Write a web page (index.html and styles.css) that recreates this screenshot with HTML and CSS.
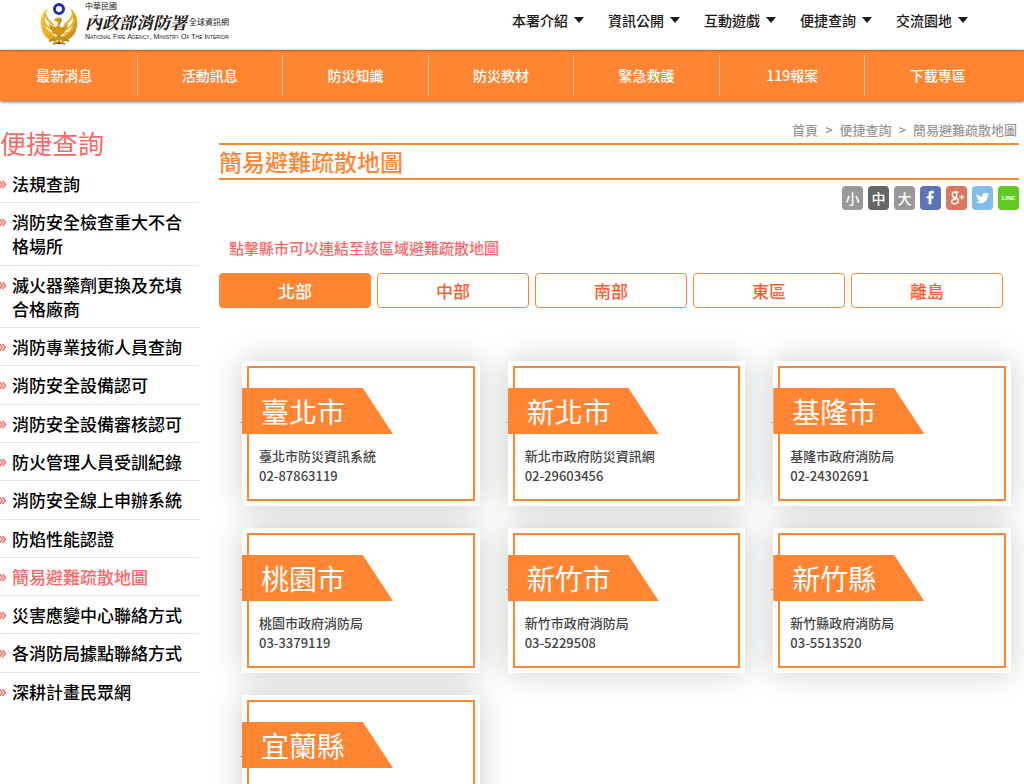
FILE: index.html
```html
<!DOCTYPE html>
<html lang="zh-Hant">
<head>
<meta charset="utf-8">
<meta name="viewport" content="width=device-width, initial-scale=1">
<title>簡易避難疏散地圖</title>
<link rel="stylesheet" href="styles.css">
</head>
<body>
<header class="top">
  <a class="logo" href="#">
    <svg class="emblem" viewBox="0 0 38 44" aria-hidden="true">
      <defs><linearGradient id="gold" x1="0" y1="0" x2="1" y2="1"><stop offset="0" stop-color="#f7d35a"/><stop offset=".5" stop-color="#e6ac1c"/><stop offset="1" stop-color="#b9861a"/></linearGradient></defs>
      <path d="M8 6C1 11-1 20 2 28c2 7 8 11 14 12l1-5C10 33 5 27 5 19c0-5 1-9 3-13zM30 6c7 5 9 14 6 22-2 7-8 11-14 12l-1-5c7-2 12-8 12-16 0-5-1-9-3-13z" fill="url(#gold)"/>
      <path d="M5 11c1 6 4 9 9 12M3 17c2 6 5 9 10 11M4 24c2 5 6 7 10 8M33 11c-1 6-4 9-9 12M35 17c-2 6-5 9-10 11M34 24c-2 5-6 7-10 8" fill="none" stroke="#e6b230" stroke-width="2"/>
      <path d="M14 19c1-4 8-5 8-1 0 3-3 4-2 7 2 1 5-1 8-4-1 7-4 11-7 12l3 7-4-2-1 4-1-4-4 2 3-7c-4-1-7-5-8-12 3 3 6 5 8 3 2-3 1-5-3-5z" fill="#cf9618"/>
      <path d="M9 39l6-2M29 39l-6-2M13 42l6-2 6 2" stroke="#b9861a" stroke-width="2"/>
      <circle cx="19" cy="7" r="4.500" fill="#fff" stroke="#1d2fb8" stroke-width="3"/>
    </svg>
    <span class="logo-text">
      <span class="logo-small">中華民國</span>
      <span class="logo-row"><strong class="logo-name">內政部消防署</strong><span class="logo-small">全球資訊網</span></span>
      <span class="logo-en">National Fire Agency, Ministry Of The Interior</span>
    </span>
  </a>
  <nav class="top-nav">
    <a href="#">本署介紹</a>
    <a href="#">資訊公開</a>
    <a href="#">互動遊戲</a>
    <a href="#">便捷查詢</a>
    <a href="#">交流園地</a>
  </nav>
</header>
<nav class="main-nav">
  <div class="main-nav-list">
    <a href="#">最新消息</a>
    <a href="#">活動訊息</a>
    <a href="#">防災知識</a>
    <a href="#">防災教材</a>
    <a href="#">緊急救護</a>
    <a href="#">119報案</a>
    <a href="#">下載專區</a>
  </div>
</nav>
<div class="page">
  <aside class="side">
    <h2 class="side-title">便捷查詢</h2>
    <ul class="side-list">
      <li><a href="#">法規查詢</a></li>
      <li><a href="#">消防安全檢查重大不合格場所</a></li>
      <li><a href="#">滅火器藥劑更換及充填合格廠商</a></li>
      <li><a href="#">消防專業技術人員查詢</a></li>
      <li><a href="#">消防安全設備認可</a></li>
      <li><a href="#">消防安全設備審核認可</a></li>
      <li><a href="#">防火管理人員受訓紀錄</a></li>
      <li><a href="#">消防安全線上申辦系統</a></li>
      <li><a href="#">防焰性能認證</a></li>
      <li><a class="current" href="#">簡易避難疏散地圖</a></li>
      <li><a href="#">災害應變中心聯絡方式</a></li>
      <li><a href="#">各消防局據點聯絡方式</a></li>
      <li><a href="#">深耕計畫民眾網</a></li>
    </ul>
  </aside>
  <main class="content">
    <nav class="crumbs"><a href="#">首頁</a><span>&gt;</span><a href="#">便捷查詢</a><span>&gt;</span><a href="#">簡易避難疏散地圖</a></nav>
    <h1 class="title">簡易避難疏散地圖</h1>
    <div class="tools">
      <button class="tool" type="button">小</button>
      <button class="tool tool-on" type="button">中</button>
      <button class="tool" type="button">大</button>
      <a class="tool facebook" href="#" aria-label="Facebook"><svg viewBox="0 0 22 24"><path d="M9 18.500v-6H7V9.800h2V8c0-2.500 1.300-3.500 3.400-3.500h2v2.700h-1.300c-.9 0-1.200.4-1.200 1.200v1.400h2.500l-.4 2.700h-2.100v6z" fill="#fff"/></svg></a>
      <a class="tool google" href="#" aria-label="Google Plus"><svg viewBox="0 0 22 24" fill="none" stroke="#fff"><ellipse cx="9" cy="8.500" rx="2.300" ry="2.700" stroke-width="1.500"/><path d="M9 5.700h4M10 11c3 2 3.300 3 2.700 5-.8 2.600-6.500 2.700-6.800 0-.2-2 2-2.700 4.500-2.600M9 11.300c-1 .8-.6 1.600.7 2.200" stroke-width="1.500"/><path d="M14 11h5M16.500 8.500v5" stroke-width="1.300"/></svg></a>
      <a class="tool twitter" href="#" aria-label="Twitter"><svg viewBox="0 0 22 24"><path d="M5 7.500c1.600 1.900 3.600 2.900 6 3-.5-2.500 1-4 2.800-4 .9 0 1.600.4 2.100.9l1.700-.6-1.100 1.600 1.500-.4-1.500 1.500c.1 4.700-3.200 8-7.400 8-1.800 0-3.400-.5-4.600-1.300 1.600.1 3-.3 4-1.200-1.300-.1-2.200-.8-2.500-1.900h1.100c-1.400-.4-2.200-1.500-2.200-2.800l1.200.3C4.800 9.800 4.500 8.600 5 7.500z" fill="#fff"/></svg></a>
      <a class="tool line" href="#">LINE</a>
    </div>
    <p class="note">點擊縣市可以連結至該區域避難疏散地圖</p>
    <div class="tabs">
      <button class="tab tab-on" type="button">北部</button>
      <button class="tab" type="button">中部</button>
      <button class="tab" type="button">南部</button>
      <button class="tab" type="button">東區</button>
      <button class="tab" type="button">離島</button>
    </div>
    <div class="cards">
      <a class="card" href="#"><div class="frame"><h3 class="city">臺北市</h3><p>臺北市防災資訊系統</p><p>02-87863119</p></div></a>
      <a class="card" href="#"><div class="frame"><h3 class="city">新北市</h3><p>新北市政府防災資訊網</p><p>02-29603456</p></div></a>
      <a class="card" href="#"><div class="frame"><h3 class="city">基隆市</h3><p>基隆市政府消防局</p><p>02-24302691</p></div></a>
      <a class="card" href="#"><div class="frame"><h3 class="city">桃園市</h3><p>桃園市政府消防局</p><p>03-3379119</p></div></a>
      <a class="card" href="#"><div class="frame"><h3 class="city">新竹市</h3><p>新竹市政府消防局</p><p>03-5229508</p></div></a>
      <a class="card" href="#"><div class="frame"><h3 class="city">新竹縣</h3><p>新竹縣政府消防局</p><p>03-5513520</p></div></a>
      <a class="card" href="#"><div class="frame"><h3 class="city">宜蘭縣</h3></div></a>
    </div>
  </main>
</div>
</body>
</html>
```
FILE: styles.css
```css
* { box-sizing: border-box; }
body {
  margin: 0;
  background: #fff;
  color: #000;
  font-family: "Noto Sans CJK TC", sans-serif;
  font-size: 14px;
  font-weight: 500;
  overflow-x: hidden;
}
a { color: inherit; text-decoration: none; }
h1, h2, h3, p, ul { margin: 0; padding: 0; }
button { font: inherit; cursor: pointer; padding: 0; }

.top {
  display: flex;
  justify-content: space-between;
  align-items: flex-start;
  height: 50px;
  padding: 0 56px 0 40px;
}
.logo { display: flex; gap: 7px; padding-top: 2px; color: #221815; }
.emblem { width: 38px; height: 44px; }
.logo-text { display: flex; flex-direction: column; }
.logo-small { font-size: 8px; line-height: 8px; font-weight: 400; }
.logo-row { display: flex; align-items: center; gap: 2px; }
.logo-name {
  font-family: "Noto Serif CJK TC", "Noto Sans CJK TC", serif;
  font-size: 17px;
  line-height: 23px;
  font-weight: 700;
  font-style: italic;
}
.logo-en {
  font-family: "Liberation Sans", sans-serif;
  font-size: 7px;
  line-height: 8px;
  font-weight: 400;
  font-variant: small-caps;
  white-space: nowrap;
}
.top-nav { display: flex; gap: 24px; padding-top: 8px; }
.top-nav a {
  display: flex;
  align-items: center;
  gap: 6px;
  line-height: 24px;
  color: #221815;
}
.top-nav a::after {
  content: "";
  border: 5px solid transparent;
  border-top: 6px solid #221815;
  border-bottom: 0;
}

.main-nav {
  position: relative;
  padding: 5px 14px 5px 0;
  background: #ff8533;
  box-shadow: 0 1px 3px rgba(0, 0, 0, .6), inset 0 2px 2px -1px rgba(0, 0, 0, .3);
}
.main-nav-list { display: flex; margin-left: -8px; }
.main-nav a {
  flex: 1;
  text-align: center;
  line-height: 41px;
  color: #fff;
}
.main-nav a + a { border-left: 1px solid #ffc299; }

.page { display: flex; gap: 20px; padding-right: 5px; }
.side { flex: 0 0 199px; padding-top: 22px; }
.side-title { font-size: 26px; line-height: 40px; font-weight: 400; color: #ff6666; }
.side-list {
  display: flex;
  flex-direction: column;
  min-height: 548px;
  padding-top: 2px;
  list-style: none;
}
.side-list li {
  flex: 1 0 auto;
  padding: 7px 0 6px;
  border-bottom: 1px solid #e6e6e6;
}
.side-list li:last-child { border-bottom-color: transparent; }
.side-list a {
  display: block;
  padding: 0 15px 0 12px;
  font-size: 17px;
  line-height: 24px;
  background: url("data:image/svg+xml,%3Csvg xmlns='http://www.w3.org/2000/svg' width='7' height='9' fill='none' stroke='%23ff6666' stroke-width='1.4'%3E%3Cpath d='M-.5 1L2.500 4.500L-.5 8M2.500 1L5.500 4.500L2.500 8'/%3E%3C/svg%3E") 0 8px no-repeat;
}
.side-list .current { color: #ff6666; }

.content { flex: 1; min-width: 0; padding-top: 17px; }
.crumbs {
  display: flex;
  justify-content: flex-end;
  gap: 7px;
  padding-right: 2px;
  font-size: 13px;
  line-height: 24px;
  color: #999;
}
.title {
  margin-top: 1px;
  border: solid #ff8533;
  border-width: 2px 0;
  font-size: 23px;
  line-height: 33px;
  font-weight: 500;
  color: #ff8533;
}
.tools { display: flex; justify-content: flex-end; gap: 5px; padding-top: 6px; }
.tool {
  display: block;
  width: 21px;
  height: 24px;
  border: 0;
  border-radius: 4px;
  background: #999;
  color: #fff;
  font-size: 14px;
  line-height: 24px;
  text-align: center;
}
.tool svg { display: block; width: 21px; height: 24px; }
.tool-on { background: #666; }
.facebook { background: #5b75b5; }
.google { background: #dc775f; }
.twitter { background: #82bdec; }
.line {
  background: #62c824;
  font-family: "Liberation Sans", sans-serif;
  font-size: 6px;
  font-weight: 700;
}
.note {
  padding: 26px 10px 13px;
  font-size: 15px;
  line-height: 24px;
  color: #ff6666;
}
.tabs { display: flex; gap: 6px; padding-right: 16px; }
.tab {
  flex: 1;
  height: 35px;
  border: 1px solid #ff8533;
  border-radius: 4px;
  background: #fff;
  color: #ff5c33;
  font-size: 17px;
  line-height: 33px;
}
.tab-on { background: #ff8533; color: #fff; }

.cards {
  display: grid;
  grid-template-columns: repeat(3, 1fr);
  gap: 22px 28px;
  padding: 53px 8px 22px 23px;
}
.card {
  position: relative;
  min-height: 145px;
  padding: 5px;
  display: flex;
  background: #fff;
  box-shadow: 0 0 30px rgba(0, 0, 0, .2);
}
.card::before {
  content: "";
  position: absolute;
  left: -2px;
  top: 61px;
  width: 2px;
  height: 1px;
  background: #aaa;
}
.frame { flex: 1; border: 2px solid #ff8533; padding: 20px 10px 12px; }
.city {
  width: 151px;
  margin: 0 0 12px -17px;
  padding-left: 19px;
  background: #ff8533;
  clip-path: polygon(0 0, 80% 0, 100% 100%, 0 100%);
  color: #fff;
  font-size: 28px;
  line-height: 46px;
  font-weight: 400;
}
.card p { font-size: 13px; line-height: 20px; color: #444; }
```
